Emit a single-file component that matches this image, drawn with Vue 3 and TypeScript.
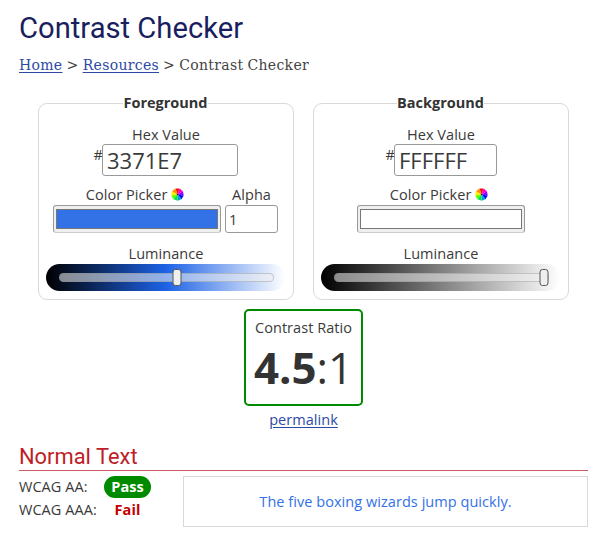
<script setup lang="ts">
interface Panel {
  id: string
  title: string
  hex: string
  alpha?: string
  luminance: number
}

const panels: Panel[] = [
  { id: 'fg', title: 'Foreground', hex: '3371E7', alpha: '1', luminance: 54.9 },
  { id: 'bg', title: 'Background', hex: 'FFFFFF', luminance: 98.3 },
]

const wheel = ['#ff1010', '#ff00c8', '#9000ff', '#0010f0', '#00a0e0', '#00e840', '#50ff00', '#f8f000', '#ff9000']
const wedge = (i: number): string => {
  const step = (Math.PI * 2) / wheel.length
  const a = -Math.PI / 2 + (i - 0.5) * step
  const b = a + step
  return `M7 7L${7 + 6.8 * Math.cos(a)} ${7 + 6.8 * Math.sin(a)}L${7 + 6.8 * Math.cos(b)} ${7 + 6.8 * Math.sin(b)}Z`
}
</script>

<template>
  <main class="page">
    <h1>Contrast Checker</h1>
    <nav class="crumbs"><a href="#">Home</a> &gt; <a href="#">Resources</a> &gt; Contrast Checker</nav>

    <div class="panels">
      <section v-for="p in panels" :key="p.id" class="panel" :class="p.id">
        <h3><span>{{ p.title }}</span></h3>
        <label class="label">Hex Value</label>
        <div class="hex-row"><span class="hash">#</span><div class="field hex">{{ p.hex }}</div></div>
        <div class="pickers">
          <div class="picker">
            <label class="label">Color Picker
              <svg class="wheel" viewBox="0 0 14 14"><path v-for="(c, i) in wheel" :key="c" :d="wedge(i)" :fill="c" /><circle cx="7" cy="7" r="0.9" fill="#222" /></svg>
            </label>
            <div class="swatch"><div class="color"></div></div>
          </div>
          <div v-if="p.alpha" class="alpha">
            <label class="label">Alpha</label>
            <div class="field alpha-field">{{ p.alpha }}</div>
          </div>
        </div>
        <label class="label lum">Luminance</label>
        <div class="slider">
          <div class="track"><div class="thumb" :style="{ left: p.luminance + '%' }"></div></div>
        </div>
      </section>
    </div>

    <div class="ratio">
      <div class="ratio-label">Contrast Ratio</div>
      <div class="ratio-value"><b>4.5</b>:1</div>
    </div>
    <div class="perma"><a href="#">permalink</a></div>

    <h2>Normal Text</h2>
    <div class="results">
      <div class="levels">
        <div class="level"><span class="name">WCAG AA:</span><b class="badge pass">Pass</b></div>
        <div class="level"><span class="name">WCAG AAA:</span><b class="badge fail">Fail</b></div>
      </div>
      <div class="sample">The five boxing wizards jump quickly.</div>
    </div>
  </main>
</template>

<style>
body { background: #fff; }
</style>

<style scoped>
.page { box-sizing: border-box; width: 600px; height: 537px; padding: 10px 12px 0 19px; overflow: hidden; font: 14.5px/20px "Open Sans", sans-serif; letter-spacing: 0.05px; color: #3a3a3a; }
.page * { box-sizing: border-box; }
h1, h2, h3 { margin: 0; letter-spacing: 0; }
h1 { font: 400 29.2px/36px Roboto, sans-serif; color: #191f5e; }
a { color: #2c4aa5; text-decoration: underline; text-underline-offset: 2px; }
.crumbs { margin-top: 9px; font: 14px/20px "DejaVu Serif", serif; letter-spacing: 0.32px; word-spacing: -0.7px; color: #444; white-space: nowrap; }
.panels { display: flex; gap: 19px; margin: 28px 0 0 19px; }
.panel { width: 256px; height: 197px; border: 1px solid #d9d9d9; border-radius: 9px; display: flex; flex-direction: column; align-items: center; }
h3 { font-size: 14.5px; font-weight: 700; line-height: 20px; margin-top: -11px; color: #333; }
h3 span { background: #fff; display: block; margin-right: 1px; }
.label { display: block; line-height: 20px; text-align: center; white-space: nowrap; }
h3 + .label { margin-top: 12px; }
.hex-row { display: flex; height: 32px; margin-top: -1px; }
.fg .hex-row, .fg .pickers { margin-right: 1px; }
.hash { width: 9px; text-indent: 0.5px; line-height: 22px; }
.field { border: 1px solid #999; border-radius: 3px; background: #fff; }
.hex { width: 136px; height: 32px; padding-left: 4px; font-size: 22px; line-height: 31px; letter-spacing: 0; }
.bg .hex { width: 103px; }
.pickers { display: flex; gap: 4px; margin-top: 9px; }
.picker { width: 168px; }
.wheel { width: 13px; height: 13px; margin-right: 4px; vertical-align: -1px; }
.swatch { height: 28px; padding: 3px 2px; background: #efefef; border: 1px solid #999; border-bottom-color: #ccc; border-radius: 3px; }
.color { height: 20px; border: 1px solid #777; background: #3371e7; }
.bg .color { background: #fff; }
.alpha { width: 53px; }
.alpha-field { height: 28px; padding-left: 3px; line-height: 27px; }
.lum { margin-top: 11px; }
.slider { width: 239px; height: 27px; margin-right: 1px; border-radius: 14px; padding: 9px 11px 0 13px; }
.fg .slider { background: linear-gradient(90deg, #000, #1d62e5 50%, #fff); }
.bg .slider { background: linear-gradient(90deg, #000, #fff); }
.track { position: relative; height: 9px; border: 1px solid #8886; border-radius: 5px; background: #efefef90; }
.thumb { position: absolute; top: -5px; width: 9px; height: 17px; transform: translateX(-50%); border: 1px solid #555; border-radius: 3px; background: #efefef; }
.ratio { width: 119px; height: 97px; margin: 9px 0 0 225px; border: 2px solid #008a00; border-radius: 5px; text-align: center; padding-top: 7px; }
.ratio-value { font-size: 43.8px; line-height: 58px; letter-spacing: 0; color: #333; white-space: nowrap; }
.perma { width: 119px; margin: 4px 0 0 225px; text-align: center; }
h2 { width: 569px; height: 28px; margin-top: 13px; border-bottom: 1px solid #cc5a62; font: 400 21.9px/27px Roboto, sans-serif; color: #bd1e27; }
.results { display: flex; margin-top: 5px; }
.levels { width: 164px; margin-top: -1px; }
.level { display: flex; align-items: center; height: 23px; }
.name { width: 85px; white-space: nowrap; }
.badge { width: 47px; height: 22px; line-height: 22px; text-align: center; border-radius: 11px; }
.pass { background: #008a00; color: #fff; }
.fail { color: #c40000; }
.sample { width: 405px; height: 51px; border: 1px solid #d9d9d9; text-align: center; line-height: 49px; color: #3371e7; }
</style>
